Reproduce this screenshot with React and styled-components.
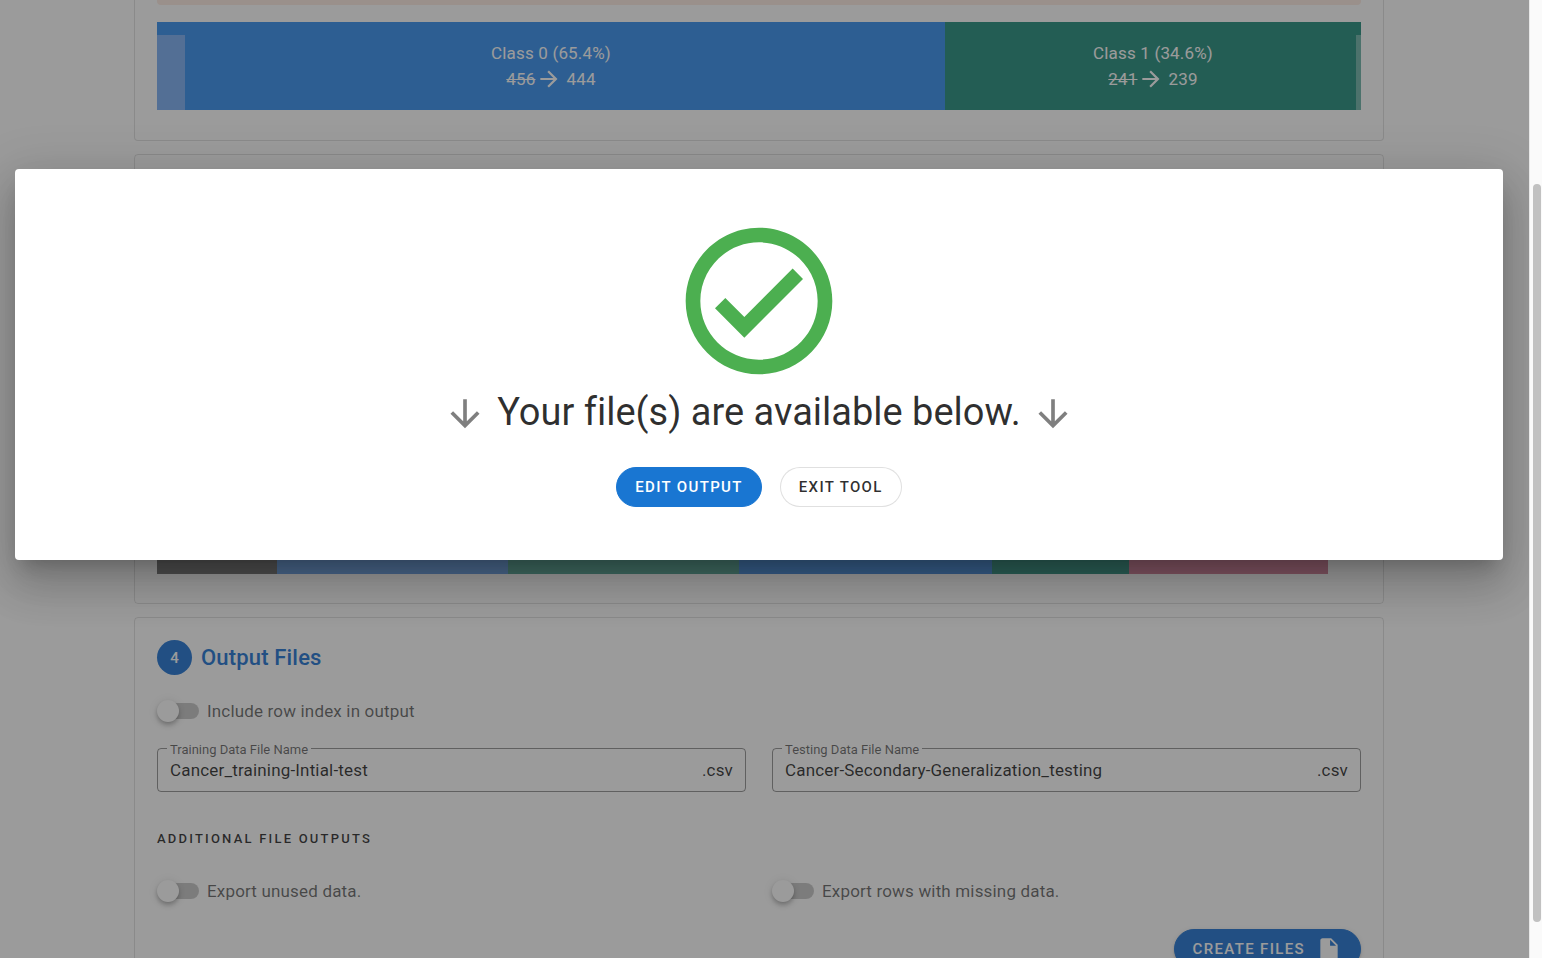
import React from "react";
import styled, { createGlobalStyle } from "styled-components";

const GlobalStyle = createGlobalStyle`
  *, *::before, *::after { box-sizing: border-box; }
  html, body { margin: 0; height: 100%; background: #fff; }
  body {
    font-family: Roboto, "Liberation Sans", sans-serif;
    font-size: 17px;
    line-height: 26px;
    letter-spacing: 0.01em;
    font-variant-ligatures: none;
    color: rgba(0, 0, 0, 0.82);
    overflow: hidden;
  }
  button, input { font-family: inherit; letter-spacing: inherit; }
`;

const Window = styled.div`
  display: grid;
  grid-template-columns: 1fr 13px;
  height: 100vh;
`;

const Viewport = styled.div`
  position: relative;
  overflow: hidden;
`;

const Page = styled.main`
  display: flex;
  flex-direction: column;
  gap: 13px;
  max-width: 1261px;
  margin: 0 auto;
  padding-right: 11px;
`;

const Card = styled.section`
  display: flex;
  flex-direction: column;
  justify-content: flex-end;
  min-height: ${(p) => p.$minHeight || "0"};
  padding: 22px 22px 29px;
  border: 1px solid rgba(0, 0, 0, 0.12);
  border-radius: 4px;
`;

const TopCard = styled(Card)`
  padding-top: 0;
  padding-bottom: 30px;
  border-top: 0;
  border-radius: 0 0 4px 4px;
`;

const AlertEdge = styled.div`
  height: 5px;
  margin-bottom: 17px;
  background: #fdebe2;
  border-radius: 0 0 4px 4px;
`;

const ClassBar = styled.div`
  display: flex;
  height: 88px;
`;

const ClassPart = styled.div`
  position: relative;
  display: flex;
  flex-direction: column;
  align-items: center;
  justify-content: center;
  flex: ${(p) => p.$share} 1 0;
  background: ${(p) => p.$color};
  color: #fff;
`;

const Removed = styled.div`
  position: absolute;
  top: 13px;
  bottom: 0;
  ${(p) => p.$side}: 0;
  width: ${(p) => p.$width};
  background: ${(p) => p.$color};
`;

const Counts = styled.div`
  display: flex;
  align-items: center;
  span { margin-left: 5px; }
`;

const SplitBar = styled.div`
  display: flex;
  height: 88px;
`;

const Split = styled.div`
  flex: ${(p) => p.$share} 1 0;
  background: ${(p) => p.$color};
`;

const StepHeader = styled.header`
  display: flex;
  align-items: center;
  gap: 9px;
  margin-bottom: 23px;
`;

const StepNumber = styled.span`
  display: grid;
  place-items: center;
  width: 35px;
  height: 35px;
  border-radius: 50%;
  background: #2376d4;
  color: #fff;
  font-size: 15px;
  font-weight: 500;
`;

const StepTitle = styled.h2`
  margin: 0;
  font-size: 22px;
  font-weight: 500;
  line-height: 35px;
  color: #2376d4;
`;

const Columns = styled.div`
  display: grid;
  grid-template-columns: 1fr 1fr;
  gap: 26px;
`;

const SwitchLabel = styled.label`
  display: flex;
  align-items: center;
  gap: 8px;
  color: rgba(0, 0, 0, 0.6);
`;

const SwitchInput = styled.input`
  appearance: none;
  display: flex;
  align-items: center;
  width: 42px;
  height: 22px;
  margin: 0;
  &::before {
    content: "";
    width: 38px;
    height: 16px;
    margin-left: 4px;
    border-radius: 8px;
    background: rgba(0, 0, 0, 0.22);
  }
  &::after {
    content: "";
    width: 22px;
    height: 22px;
    flex: none;
    margin-left: -42px;
    border-radius: 50%;
    background: #fff;
    box-shadow: 0 2px 4px -1px rgba(0, 0, 0, 0.2), 0 4px 5px rgba(0, 0, 0, 0.14), 0 1px 10px rgba(0, 0, 0, 0.12);
  }
`;

const FieldRow = styled(Columns)`
  margin: 24px 0 34px;
`;

const Field = styled.div`
  position: relative;
  display: flex;
  align-items: center;
  height: 44px;
  padding: 0 12px;
  border: 1px solid rgba(0, 0, 0, 0.42);
  border-radius: 4px;
`;

const FieldLabel = styled.label`
  position: absolute;
  top: -8px;
  left: 9px;
  padding: 0 3px;
  background: #fff;
  color: rgba(0, 0, 0, 0.6);
  font-size: 13px;
  line-height: 18px;
  letter-spacing: normal;
`;

const FieldInput = styled.input`
  flex: 1;
  min-width: 0;
  height: 42px;
  padding: 0;
  border: 0;
  outline: 0;
  background: transparent;
  color: inherit;
  font-size: 17px;
`;

const Overline = styled.h3`
  margin: 0 0 26px;
  font-size: 13px;
  font-weight: 500;
  line-height: 26px;
  letter-spacing: 0.17em;
  text-transform: uppercase;
`;

const Actions = styled.div`
  display: flex;
  justify-content: flex-end;
  margin-top: 25px;
`;

const PillButton = styled.button`
  display: flex;
  align-items: center;
  justify-content: center;
  gap: 11px;
  height: 40px;
  padding: 0 18px;
  border: 1px solid ${(p) => (p.$outlined ? "rgba(0, 0, 0, 0.12)" : "#1976d2")};
  border-radius: 20px;
  background: ${(p) => (p.$outlined ? "#fff" : "#1976d2")};
  color: ${(p) => (p.$outlined ? "rgba(0, 0, 0, 0.82)" : "#fff")};
  font-size: 15px;
  font-weight: 500;
  letter-spacing: 0.09em;
  text-transform: uppercase;
  white-space: nowrap;
`;

const CreateButton = styled(PillButton)`
  border-color: #2376d4;
  background: #2376d4;
  box-shadow: 0 3px 1px -2px rgba(0, 0, 0, 0.2), 0 2px 2px rgba(0, 0, 0, 0.14), 0 1px 5px rgba(0, 0, 0, 0.12);
`;

const Scrim = styled.div`
  position: absolute;
  inset: 0;
  padding: 169px 26px 0 15px;
  background: rgba(33, 33, 33, 0.45);
`;

const Dialog = styled.div`
  display: flex;
  flex-direction: column;
  align-items: center;
  padding: 44px 22px 53px;
  border-radius: 4px;
  background: #fff;
  box-shadow: 0 12px 17px -8px rgba(0, 0, 0, 0.2), 0 26px 42px 3px rgba(0, 0, 0, 0.14), 0 10px 51px 9px rgba(0, 0, 0, 0.12);
`;

const Message = styled.div`
  display: flex;
  align-items: flex-end;
  gap: 10px;
  height: 47px;
  margin-bottom: 31px;
  color: rgba(0, 0, 0, 0.5);
  h1 {
    margin: 0;
    font-size: 38px;
    font-weight: 400;
    line-height: 48px;
    letter-spacing: normal;
    color: rgba(0, 0, 0, 0.82);
  }
`;

const DialogActions = styled.div`
  display: flex;
  gap: 18px;
`;

const ScrollTrack = styled.div`
  display: flex;
  flex-direction: column;
  align-items: center;
  padding: 184px 1px 0 2px;
  border-left: 1px solid #e8e8e8;
  background: #fafafa;
`;

const ScrollThumb = styled.div`
  width: 8px;
  height: 738px;
  border-radius: 4px;
  background: #c1c1c1;
`;

const paths = {
  right: "M4,11V13H16L10.5,18.5L11.92,19.92L19.84,12L11.92,4.08L10.5,5.5L16,11H4Z",
  down: "M11,4H13V16L18.5,10.5L19.92,11.92L12,19.84L4.08,11.92L5.5,10.5L11,16V4Z",
  file: "M13,9V3.5L18.5,9M6,2C4.89,2 4,2.89 4,4V20A2,2 0 0,0 6,22H18A2,2 0 0,0 20,20V8L14,2H6Z",
  check:
    "M12 2C6.5 2 2 6.5 2 12S6.5 22 12 22 22 17.5 22 12 17.5 2 12 2M12 20C7.59 20 4 16.41 4 12S7.59 4 12 4 20 7.59 20 12 16.41 20 12 20M16.59 7.58L10 14.17L7.41 11.59L6 13L10 17L18 9L16.59 7.58Z",
};

const Svg = styled.svg`
  display: block;
  flex: none;
  fill: ${(p) => p.$color || "currentColor"};
`;

function Icon({ name, size, color }) {
  return (
    <Svg viewBox="0 0 24 24" width={size} height={size} $color={color} aria-hidden="true">
      <path d={paths[name]} />
    </Svg>
  );
}

const classes = [
  {
    name: "Class 0 (65.4%)",
    before: 456,
    after: 444,
    share: 788,
    color: "#3890ee",
    side: "left",
    removed: "28px",
    removedColor: "#7cb0f4",
  },
  {
    name: "Class 1 (34.6%)",
    before: 241,
    after: 239,
    share: 416,
    color: "#268e7e",
    side: "right",
    removed: "5px",
    removedColor: "#70b5aa",
  },
];

const splits = [
  { share: 120, color: "#757575" },
  { share: 231, color: "#6ca2e6" },
  { share: 231, color: "#58a898" },
  { share: 253, color: "#4a90e0" },
  { share: 137, color: "#369686" },
  { share: 199, color: "#d4809c" },
  { share: 33, color: "transparent" },
];

function Switch({ children }) {
  return (
    <SwitchLabel>
      <SwitchInput type="checkbox" role="switch" />
      {children}
    </SwitchLabel>
  );
}

function FileField({ id, label, value }) {
  return (
    <Field>
      <FieldLabel htmlFor={id}>{label}</FieldLabel>
      <FieldInput id={id} type="text" defaultValue={value} />
      <span>.csv</span>
    </Field>
  );
}

export default function App() {
  return (
    <Window>
      <GlobalStyle />
      <Viewport>
        <Page>
          <TopCard>
            <AlertEdge />
            <ClassBar>
              {classes.map((c) => (
                <ClassPart key={c.name} $share={c.share} $color={c.color}>
                  <Removed $side={c.side} $width={c.removed} $color={c.removedColor} />
                  <div>{c.name}</div>
                  <Counts>
                    <s>{c.before}</s>
                    <Icon name="right" size={26} />
                    <span>{c.after}</span>
                  </Counts>
                </ClassPart>
              ))}
            </ClassBar>
          </TopCard>
          <Card $minHeight="450px">
            <SplitBar>
              {splits.map((s) => (
                <Split key={s.color} $share={s.share} $color={s.color} />
              ))}
            </SplitBar>
          </Card>
          <Card>
            <StepHeader>
              <StepNumber>4</StepNumber>
              <StepTitle>Output Files</StepTitle>
            </StepHeader>
            <Switch>Include row index in output</Switch>
            <FieldRow>
              <FileField id="training" label="Training Data File Name" value="Cancer_training-Intial-test" />
              <FileField id="testing" label="Testing Data File Name" value="Cancer-Secondary-Generalization_testing" />
            </FieldRow>
            <Overline>Additional file outputs</Overline>
            <Columns>
              <Switch>Export unused data.</Switch>
              <Switch>Export rows with missing data.</Switch>
            </Columns>
            <Actions>
              <CreateButton type="button">
                Create files
                <Icon name="file" size={26} />
              </CreateButton>
            </Actions>
          </Card>
        </Page>
        <Scrim>
          <Dialog role="dialog" aria-modal="true" aria-labelledby="message">
            <Icon name="check" size={176} color="#4caf50" />
            <Message>
              <Icon name="down" size={44} />
              <h1 id="message">Your file(s) are available below.</h1>
              <Icon name="down" size={44} />
            </Message>
            <DialogActions>
              <PillButton type="button">Edit output</PillButton>
              <PillButton type="button" $outlined>Exit tool</PillButton>
            </DialogActions>
          </Dialog>
        </Scrim>
      </Viewport>
      <ScrollTrack>
        <ScrollThumb />
      </ScrollTrack>
    </Window>
  );
}
